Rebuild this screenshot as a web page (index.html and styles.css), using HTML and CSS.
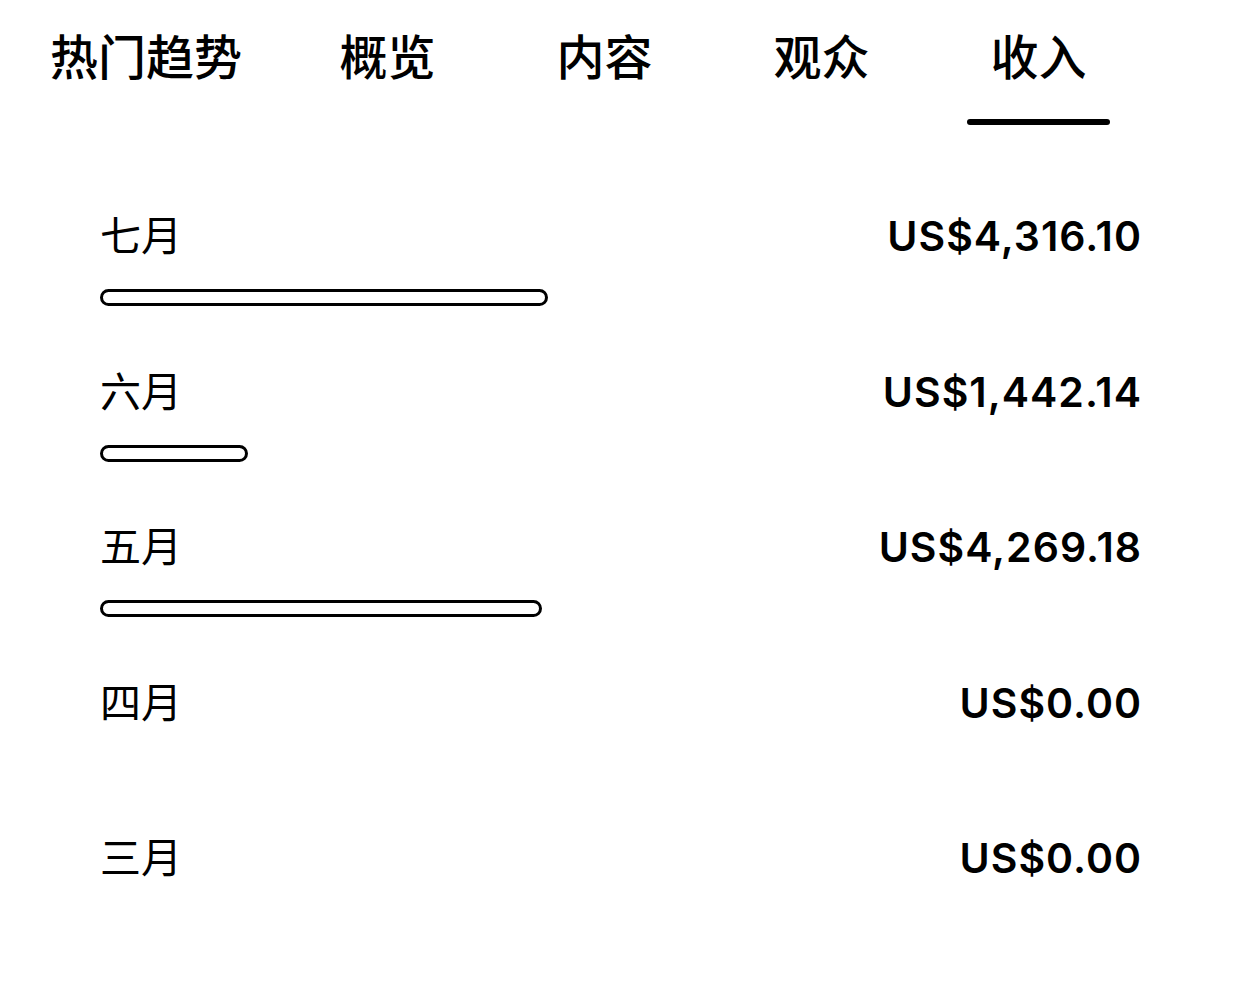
FILE: index.html
```html
<!DOCTYPE html>
<html lang="zh-CN">
<head>
<meta charset="utf-8">
<title>收入</title>
<link rel="stylesheet" href="styles.css">
</head>
<body>
<nav class="tabs">
  <div class="tab tab-first"><span class="tab-label">热门趋势</span></div>
  <div class="tab"><span class="tab-label">概览</span></div>
  <div class="tab"><span class="tab-label">内容</span></div>
  <div class="tab"><span class="tab-label">观众</span></div>
  <div class="tab tab-active"><span class="tab-label">收入</span><span class="tab-indicator"></span></div>
</nav>
<main class="list">
  <div class="row">
    <div class="row-head"><span class="month">七月</span><span class="amount">US$4,316.10</span></div>
    <div class="bar" style="width:448px"></div>
  </div>
  <div class="row">
    <div class="row-head"><span class="month">六月</span><span class="amount">US$1,442.14</span></div>
    <div class="bar" style="width:148px"></div>
  </div>
  <div class="row">
    <div class="row-head"><span class="month">五月</span><span class="amount">US$4,269.18</span></div>
    <div class="bar" style="width:442px"></div>
  </div>
  <div class="row">
    <div class="row-head"><span class="month">四月</span><span class="amount">US$0.00</span></div>
  </div>
  <div class="row">
    <div class="row-head"><span class="month">三月</span><span class="amount">US$0.00</span></div>
  </div>
</main>
</body>
</html>
```
FILE: styles.css
```css
* { box-sizing: border-box; }
html, body { margin: 0; padding: 0; background: #fff; color: #000; }
body {
  width: 1242px;
  height: 993px;
  overflow: hidden;
  font-family: "Noto Sans CJK SC", "Noto Sans", sans-serif;
}
.tabs {
  display: flex;
  align-items: flex-start;
  height: 126px;
  padding-left: 50px;
}
.tab {
  width: 217px;
  display: flex;
  flex-direction: column;
  align-items: center;
  padding-top: 30px;
}
.tab-first {
  width: auto;
  padding-right: 37px;
  align-items: flex-start;
}
.tab-label {
  font-size: 48px;
  line-height: 48px;
  font-weight: 500;
  white-space: nowrap;
}
.tab-indicator {
  display: block;
  width: 143px;
  height: 6px;
  border-radius: 3px;
  background: #000;
  margin-top: 41px;
}
.list {
  padding: 87px 0 0 100px;
}
.row {
  height: 155.5px;
  display: flex;
  flex-direction: column;
  align-items: flex-start;
}
.row-head {
  width: 1042px;
  display: flex;
  justify-content: space-between;
  align-items: baseline;
}
.month {
  font-size: 41px;
  line-height: 41px;
}
.amount {
  font-family: "Inter", "Liberation Sans", sans-serif;
  font-weight: 600;
  font-size: 41px;
  line-height: 41px;
  letter-spacing: 1px;
}
.bar {
  height: 17px;
  border: 3px solid #000;
  border-radius: 9px;
  margin-top: 32px;
}
```
